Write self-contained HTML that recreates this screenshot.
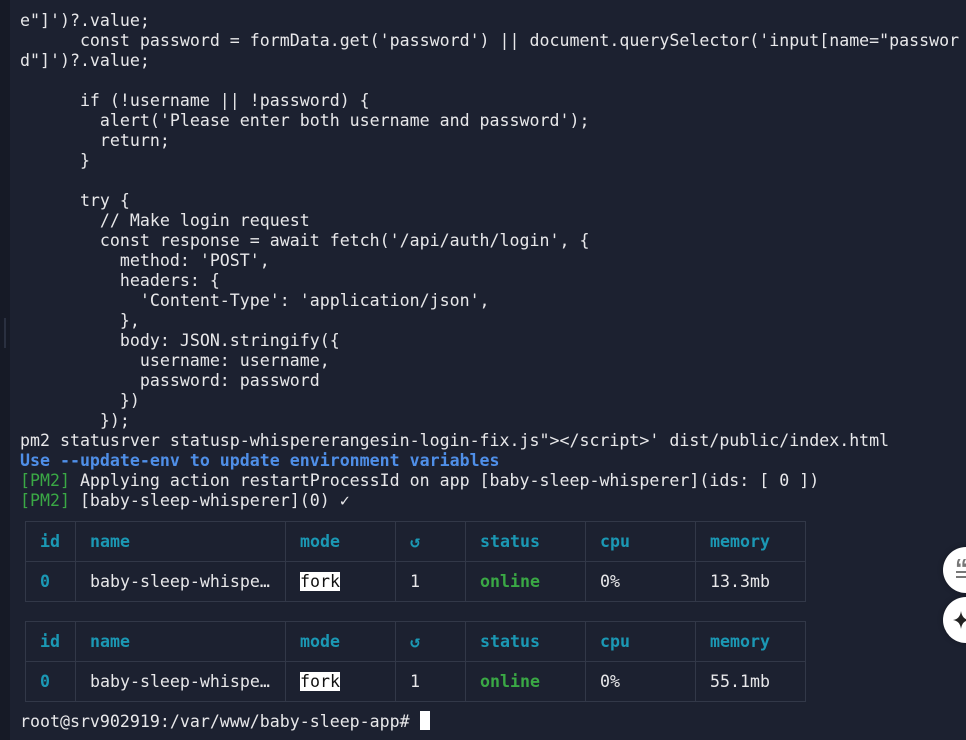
<!DOCTYPE html>
<html><head><meta charset="utf-8"><style>
*{margin:0;padding:0;box-sizing:border-box}
html,body{width:966px;height:740px;overflow:hidden;background:#1c2130}
body{position:relative;font-family:"DejaVu Sans Mono","Liberation Mono",monospace;font-size:16.6px;color:#e8e8ea}
.strip{position:absolute;left:0;top:0;width:10px;height:740px;background:#161a26}
.grip{position:absolute;left:4px;top:318px;width:2px;height:30px;background:#2a3040}
pre{position:absolute;left:20px;top:11px;font:inherit;line-height:20px;white-space:pre}
.b{color:#4f8fe8;font-weight:bold}
.g{color:#3aa845}
table{position:absolute;left:25px;border-collapse:collapse;font:inherit}
td{border:1px solid #323848;height:40px;padding:0 0 0 14px;white-space:pre}
.h td{color:#1b98b4;font-weight:bold}
.on{color:#3aa845;font-weight:bold}
.fork{background:#fff;color:#111}
.c0{color:#1b98b4;font-weight:bold}
.btn{position:absolute;width:46px;height:46px;border-radius:50%;background:#fff;left:943px;box-shadow:0 0 6px rgba(0,0,0,.3)}
.cur{display:inline-block;width:10px;height:19px;background:#fff;vertical-align:-3px}
</style></head><body>
<div class="strip"></div><div class="grip"></div>
<pre>e"]')?.value;
      const password = formData.get('password') || document.querySelector('input[name="passwor
d"]')?.value;

      if (!username || !password) {
        alert('Please enter both username and password');
        return;
      }

      try {
        // Make login request
        const response = await fetch('/api/auth/login', {
          method: 'POST',
          headers: {
            'Content-Type': 'application/json',
          },
          body: JSON.stringify({
            username: username,
            password: password
          })
        });
pm2 statusrver statusp-whispererangesin-login-fix.js"&gt;&lt;/script&gt;' dist/public/index.html
<span class="b">Use --update-env to update environment variables</span>
<span class="g">[PM2]</span> Applying action restartProcessId on app [baby-sleep-whisperer](ids: [ 0 ])
<span class="g">[PM2]</span> [baby-sleep-whisperer](0) ✓</pre>
<table style="top:521px">
<colgroup><col style="width:50px"><col style="width:210px"><col style="width:110px"><col style="width:70px"><col style="width:120px"><col style="width:110px"><col style="width:110px"></colgroup>
<tr class="h"><td>id</td><td>name</td><td>mode</td><td>↺</td><td>status</td><td>cpu</td><td>memory</td></tr>
<tr><td class="c0">0</td><td>baby-sleep-whispe…</td><td><span class="fork">fork</span></td><td>1</td><td class="on">online</td><td>0%</td><td>13.3mb</td></tr>
</table>
<table style="top:621px">
<colgroup><col style="width:50px"><col style="width:210px"><col style="width:110px"><col style="width:70px"><col style="width:120px"><col style="width:110px"><col style="width:110px"></colgroup>
<tr class="h"><td>id</td><td>name</td><td>mode</td><td>↺</td><td>status</td><td>cpu</td><td>memory</td></tr>
<tr><td class="c0">0</td><td>baby-sleep-whispe…</td><td><span class="fork">fork</span></td><td>1</td><td class="on">online</td><td>0%</td><td>55.1mb</td></tr>
</table>
<pre style="top:711px">root@srv902919:/var/www/baby-sleep-app# <span class="cur"></span></pre>
<div class="btn" style="top:547px">
<svg width="46" height="46" style="position:absolute;left:0;top:0"><text x="12" y="30" font-size="26" font-weight="bold" fill="#777" font-family="Liberation Sans,sans-serif">“</text><rect x="13" y="24" width="12" height="2" fill="#777"/><rect x="13" y="29" width="12" height="2" fill="#777"/></svg>
</div>
<div class="btn" style="top:597px">
<svg width="46" height="46" style="position:absolute;left:0;top:0"><path d="M18 14 Q19 22 26 23 Q19 24 18 32 Q17 24 10 23 Q17 22 18 14Z" fill="#222"/></svg>
</div>
</body></html>
